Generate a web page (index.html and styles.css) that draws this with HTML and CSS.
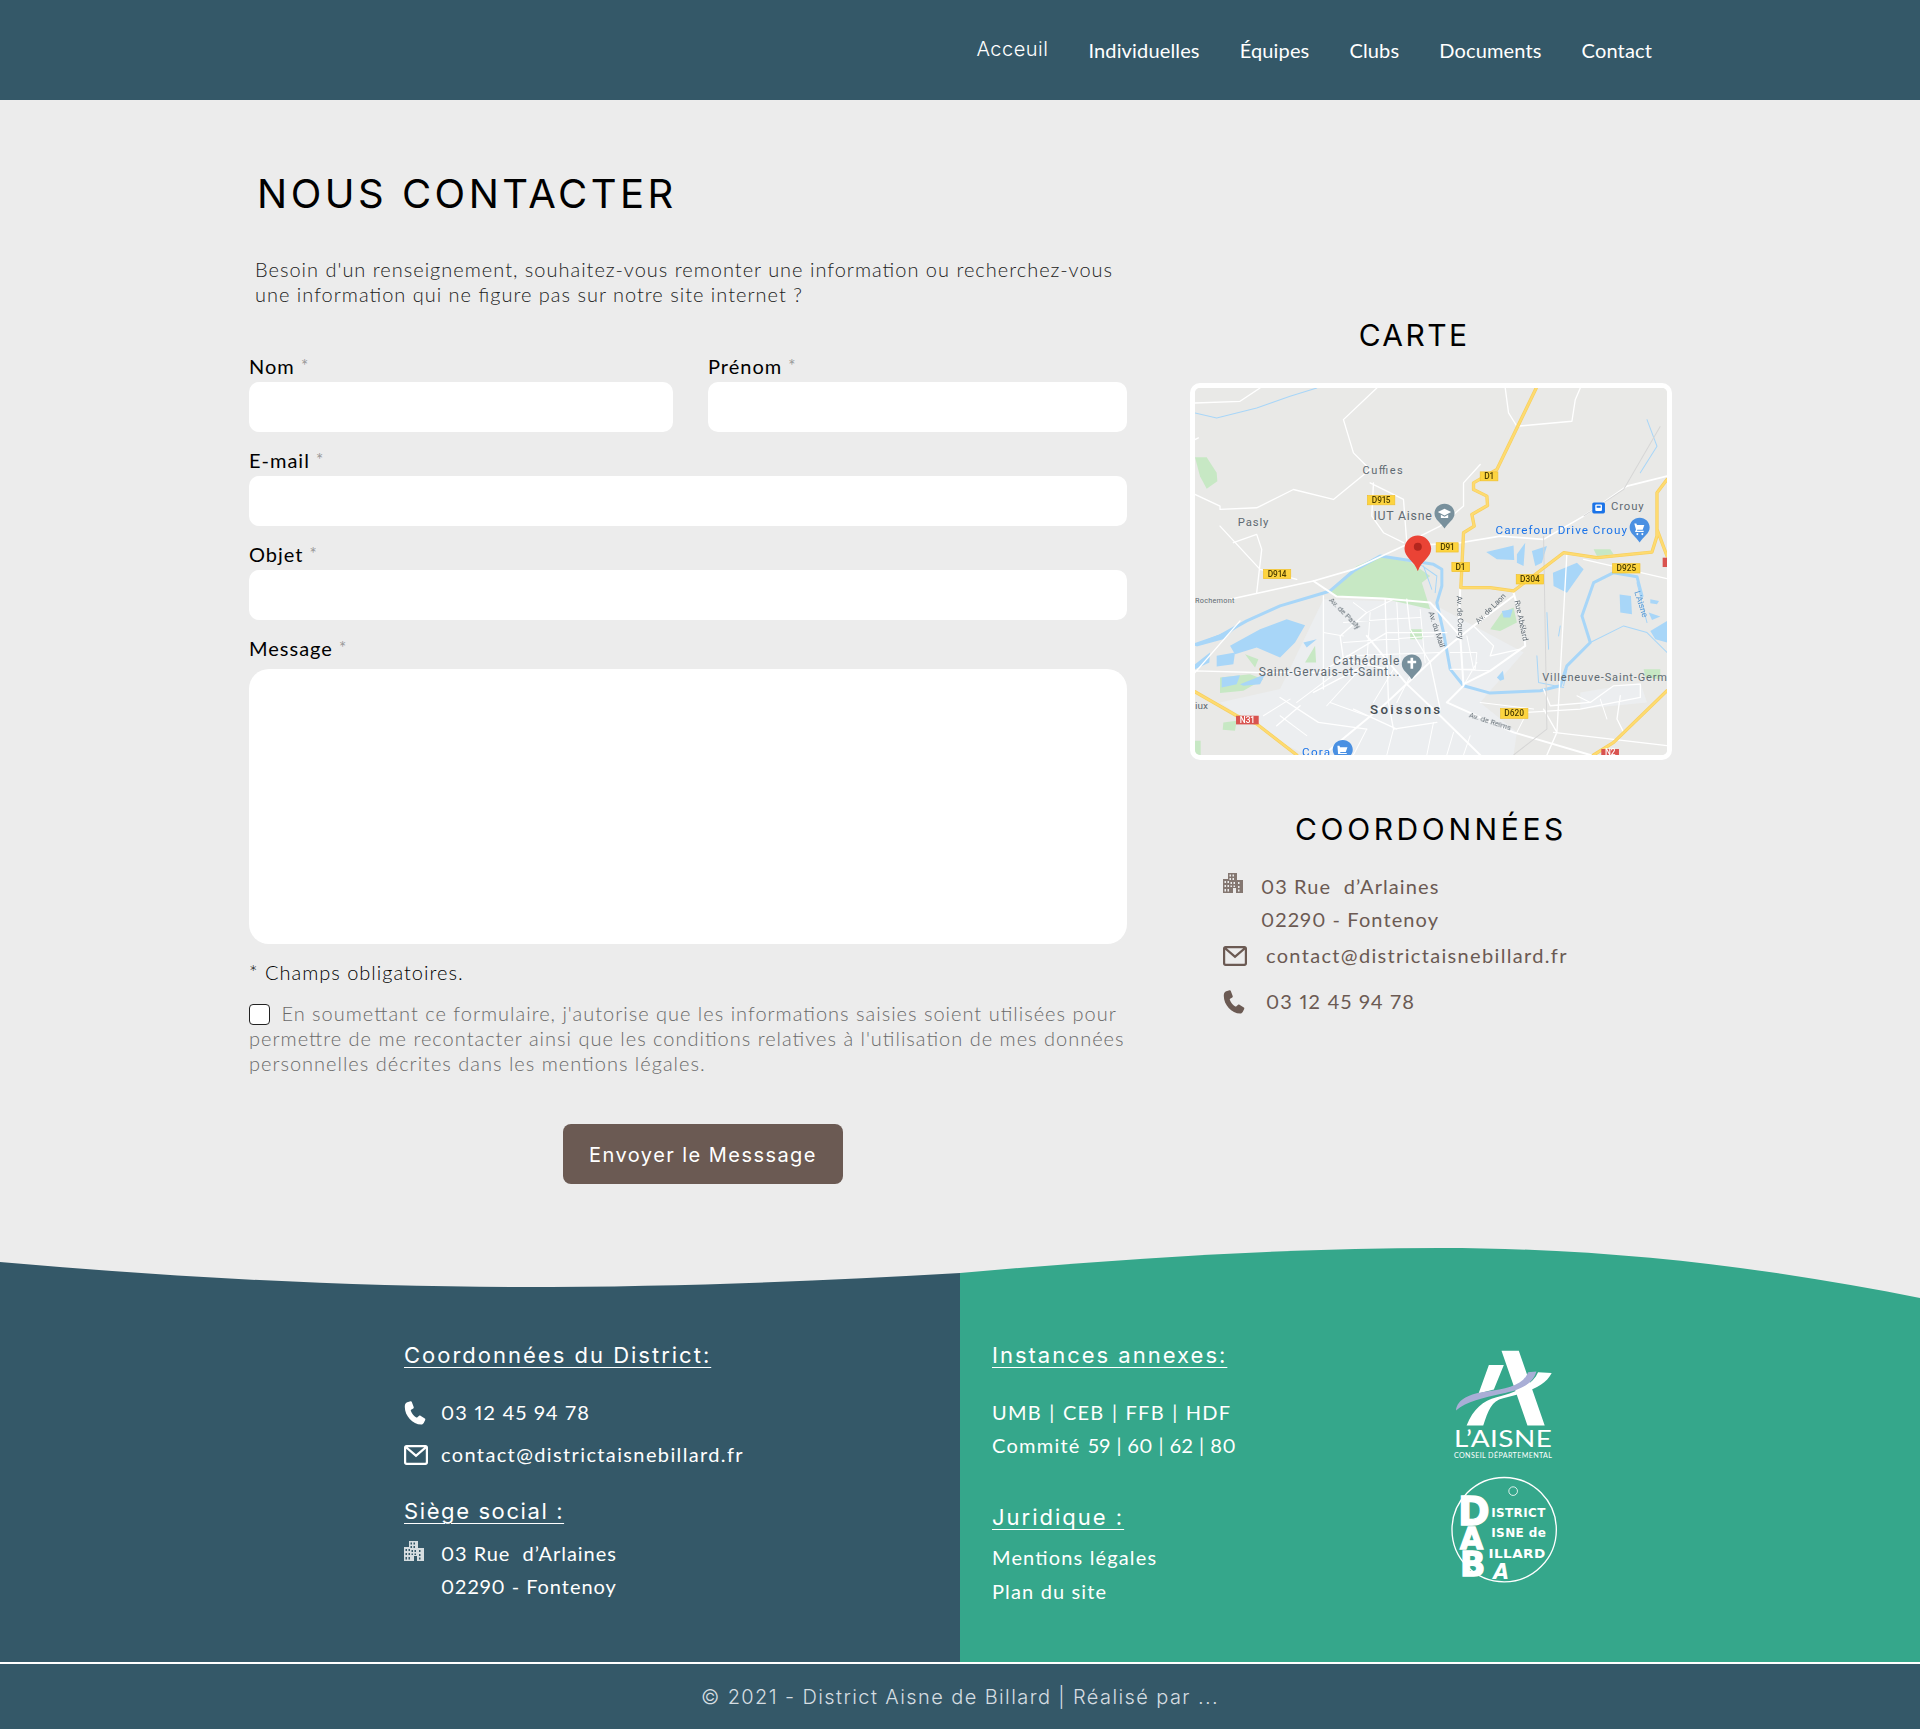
FILE: index.html
```html
<!DOCTYPE html>
<html lang="fr">
<head>
    <meta charset="UTF-8">
    <meta name="viewport" content="width=device-width, initial-scale=1.0">
    <title>Nous contacter</title>
    <link rel="stylesheet" href="styles.css">
</head>
<body>
    <svg class="sprites" width="0" height="0">
        <symbol id="i-phone" viewBox="2 0 22 24">
            <path d="M5.2 1.2 8.6 .3c.6-.1 1 .1 1.2.6l1.900 5.200c.2.500 0 1-.4 1.300L9.100 8.800c-.3.300-.4.700-.2 1.100 1.100 2.800 2.900 5 5.400 6.500.4.200.8.200 1.100-.1l1.700-1.500c.4-.3.900-.4 1.400-.1l4.300 2.900c.5.300.6.800.4 1.300l-1.500 3.200c-.5.900-1.300 1.500-2.400 1.500C10 23.400 1.800 13.500 2.900 4.300c.2-1.500 1-2.700 2.300-3.100z"/>
        </symbol>
        <symbol id="i-mail" viewBox="0 0 24 20">
            <path fill-rule="evenodd" d="M2.500 0h19C22.900 0 24 1.100 24 2.500v15c0 1.400-1.100 2.500-2.500 2.500h-19C1.100 20 0 18.900 0 17.500v-15C0 1.100 1.100 0 2.500 0zM3.800 2.200 12 9.300l8.200-7.100H3.800zM21.800 3.700 12 12.200 2.200 3.700v13.600c0 .3.200.5.500.5h18.600c.3 0 .5-.2.500-.5V3.700z"/>
        </symbol>
        <symbol id="i-building" viewBox="0 0 20 20">
            <path fill-rule="evenodd" d="M5 0h9v7h6v13h-7v-5h-3v5H0V6h5V0zM6.500 1.500v2h1.500v-2H6.500zm3 0v2H11v-2H9.500zM6.500 5v2h1.500V5H6.500zm3 0v2H11V5H9.500zM1.500 8v2H3V8H1.500zm3 0v2H6V8H4.500zm3 1v2H9V9H7.500zm3 0v2H12V9h-1.500zM15 9v2h1.500V9H15zM1.500 12v2H3v-2H1.500zm3 0v2H6v-2H4.500zm3 .5v1.500H9v-1.500H7.500zm3 0v1.500H12v-1.500h-1.500zM15 13v2h1.500v-2H15zM1.500 16v2.500H3V16H1.500zm3 0v2.500H6V16H4.500zM15 16.500v2h1.500v-2H15z"/>
        </symbol>
    </svg>

    <header class="topbar">
        <nav class="topnav">
            <a class="topnav-link current" href="#">Acceuil</a>
            <a class="topnav-link" href="#">Individuelles</a>
            <a class="topnav-link" href="#">Équipes</a>
            <a class="topnav-link" href="#">Clubs</a>
            <a class="topnav-link" href="#">Documents</a>
            <a class="topnav-link" href="#">Contact</a>
        </nav>
    </header>

    <main class="page">
        <section class="contact-form">
            <h1>NOUS CONTACTER</h1>
            <p class="intro">Besoin d'un renseignement, souhaitez-vous remonter une information ou recherchez-vous une information qui ne figure pas sur notre site internet ?</p>

            <form>
                <div class="form-row">
                    <div class="field field-nom">
                        <label>Nom <span class="req">*</span></label>
                        <input type="text">
                    </div>
                    <div class="field field-prenom">
                        <label>Prénom <span class="req">*</span></label>
                        <input type="text">
                    </div>
                </div>
                <div class="field">
                    <label>E-mail <span class="req">*</span></label>
                    <input type="text">
                </div>
                <div class="field">
                    <label>Objet <span class="req">*</span></label>
                    <input type="text">
                </div>
                <div class="field field-message">
                    <label>Message <span class="req">*</span></label>
                    <textarea></textarea>
                </div>
                <p class="mandatory">* Champs obligatoires.</p>
                <p class="consent"><input type="checkbox"> En soumettant ce formulaire, j'autorise que les informations saisies soient utilisées pour permettre de me recontacter ainsi que les conditions relatives à l'utilisation de mes données personnelles décrites dans les mentions légales.</p>
                <div class="submit-row">
                    <button type="button">Envoyer le Messsage</button>
                </div>
            </form>
        </section>

        <aside class="side">
            <h2 class="side-carte">CARTE</h2>
            <div class="map">
                <svg viewBox="45 55 1415 1103" preserveAspectRatio="none">
                    <rect x="45" y="55" width="1415" height="1103" fill="#e9e9e7"/>
                    <!-- city -->
                    <path d="M430 690 750 700 900 780 1030 850 900 1000 1010 1090 1000 1158H380L300 1120 120 1000 300 960z" fill="#eceef0"/>
                    <path d="M1200 970 1380 940 1400 1000 1200 1020z" fill="#eceef0"/>
                    <!-- greens -->
                    <path d="M445 665 530 590 600 560 690 578 750 620 725 640 750 720 610 688 470 682z" fill="#c7e8c4"/>
                    <path d="M45 263H80L110 310 112 335 80 358 60 320z" fill="#c7e8c4"/>
                    <path d="M930 780 965 730 1000 715 1010 760 960 785z" fill="#c7e8c4"/>
                    <path d="M375 880 405 830 408 880z M120 925 210 915 250 930 190 965 120 972z M690 780H728V810H690z M130 1060 170 1055 165 1085 128 1082z M1240 540H1290L1300 555 1250 560z M45 1115H62V1158H45z M195 855 235 870 225 895z M1390 900H1440V930L1395 925z" fill="#c7e8c4"/>
                    <!-- water -->
                    <path d="M150 830 240 780 320 750 375 768 345 820 300 865 230 835 165 855z" fill="#a8d6f8"/>
                    <path d="M45 885 90 850 88 880 45 900z M110 860 165 850 160 885 110 892z M125 925 180 918 170 945 125 955z M180 945 255 915 240 945 190 950z M370 820 410 810 380 835z M45 825 170 775 130 810 50 832z" fill="#a8d6f8"/>
                    <path d="M918 548 1000 528 1002 572 950 570z M1010 555 1035 520 1030 590 1010 580z M1055 545 1100 530 1085 580 1065 590z M1118 610 1190 580 1210 600 1160 670 1120 650z M1318 676 1352 680 1355 735 1320 730z M1410 690 1436 695 1430 705 1410 702z M1405 730 1440 742 1415 752z M1410 785 1460 755V820L1425 810z M950 925 968 905 972 930 960 935z M965 725 998 720 990 745 970 745z" fill="#a8d6f8"/>
                    <g fill="none" stroke="#a8d6f8" stroke-linejoin="round" stroke-linecap="round">
                        <path stroke-width="9" d="M45 826 120 800 200 755 300 710 400 680 450 665 520 605 600 560 680 572 760 585 785 600 785 650 770 700 790 790 810 900 850 950 930 972 1080 965 1140 950 1160 890 1230 820 1205 740 1240 640 1300 610 1370 622 1385 680"/>
                        <path stroke-width="3" d="M45 130 110 145 230 115 330 80 410 55M1230 820 1330 770 1400 790 1460 850M1160 900 1150 950M1370 640 1400 760M1070 860 1075 940 1150 955M1100 730 1105 840M1140 770 1135 800"/>
                        <path stroke-width="3" d="M720 585 770 620 765 670M730 590 755 660M1400 150 1430 230 1380 310"/>
                    </g>
                    <!-- roads -->
                    <g fill="none" stroke="#fff" stroke-width="5" stroke-linejoin="round" stroke-linecap="round">
                        <path d="M150 690 400 635 520 600 670 530 840 520 960 500 1090 510 1210 440 1340 350 1460 320"/>
                        <path stroke-width="6" d="M400 635 470 682 610 688 750 700 840 800 850 950 800 1000 1000 1090 1230 1158M840 660 835 810M1000 670 1030 780 1035 830 930 905 850 945M1000 680 880 770 780 850 620 1000 430 1158M560 800 680 945 780 1040 900 1158"/>
                        <path stroke-width="4" d="M120 470 240 600 350 630M160 520 230 495 245 540 230 670M45 375 120 410 120 420 230 415 340 360 460 390 570 300 520 250 490 150 590 55M570 340 670 390 680 520M580 340 575 440 610 490 670 520M975 55 985 130 1010 170 1175 155 1185 90 1200 55M900 285 850 340 850 410 780 470 720 500M45 100 180 95 240 55M45 210 55 205M180 755 45 910M45 905 230 910 420 910 620 790M430 680 430 960M615 688 625 1000 640 1080 770 1060M680 690 690 780 750 880 780 1020M560 730 480 800 490 870 620 900M400 970 590 870M620 790 800 790M880 770 940 830 930 860 1020 840M300 985 415 1060 560 1080M360 1010 290 1070M520 1020 650 1080M1090 960 1110 1010 1230 1000 1300 950 1380 945 1380 985 1200 1020 1040 1030M1320 980 1310 1050 1330 1090M1120 1090 1460 1130M1090 1020 1130 1090 1100 1158M1210 570 1460 628M1160 550 1130 1090"/>
                        <path stroke-width="3" d="M520 700 560 730 640 690M490 760 620 750 720 745M490 820 760 800M500 860 780 850M570 730 560 880M650 700 660 880M720 720 735 880M430 790 490 800M350 1000 470 910M450 1000 560 1040M540 900 440 1010M640 900 580 1000M700 900 650 1000M810 850 890 850 885 900 820 900M810 900 930 905M860 800 880 900M890 880 850 950M640 1080 620 1158M760 1060 740 1158M820 1090 800 1158M870 1100 850 1158M560 1080 520 1158M300 1040 380 1100M1190 980 1230 1000M1260 990 1280 1050M1040 1030 1010 1090M330 990 250 1040M900 1000 1060 1020"/>
                    </g>
                    <path d="M1090 500 1100 1080 1000 1158" fill="none" stroke="#d6d6d6" stroke-width="3"/>
                    <path d="M1210 440 1330 360 1440 170" fill="none" stroke="#d6d6d6" stroke-width="3"/>
                    <!-- main yellow roads -->
                    <g fill="none" stroke="#f7cf5f" stroke-width="10" stroke-linejoin="round" stroke-linecap="round">
                        <path d="M1068 55 950 300 880 340 880 360 920 380 922 408 875 435 882 470 850 490 842 655 930 655 1000 665 1150 550 1250 565 1415 548 1430 500 1430 370 1460 330M1430 480 1460 560M45 968 170 1040 230 1065 350 1158M1460 965 1300 1120 1240 1158"/>
                    </g>
                    <g fill="none" stroke="#fedb70" stroke-width="6" stroke-linejoin="round" stroke-linecap="round">
                        <path d="M1068 55 950 300 880 340 880 360 920 380 922 408 875 435 882 470 850 490 842 655 930 655 1000 665 1150 550 1250 565 1415 548 1430 500 1430 370 1460 330M1430 480 1460 560M45 968 170 1040 230 1065 350 1158M1460 965 1300 1120 1240 1158"/>
                    </g>
                    <!-- labels -->
                    <g font-family="Roboto, sans-serif" fill="#5f6a72">
                        <text x="547" y="312" font-size="33" textLength="121">Cuffies</text>
                        <text x="173" y="469" font-size="34" textLength="92">Pasly</text>
                        <text x="580" y="452" font-size="37" textLength="175">IUT Aisne</text>
                        <text x="1292" y="422" font-size="34" textLength="98">Crouy</text>
                        <text x="45" y="702" font-size="22" textLength="118">Rochemont</text>
                        <text x="459" y="888" font-size="36" textLength="199">Cathédrale</text>
                        <text x="236" y="922" font-size="36" textLength="422">Saint-Gervais-et-Saint...</text>
                        <text x="1086" y="935" font-size="33" textLength="374">Villeneuve-Saint-Germ</text>
                        <text x="45" y="1020" font-size="30">iux</text>
                        <text x="570" y="1034" font-size="40" font-weight="500" textLength="210" fill="#444c52">Soissons</text>
                        <g font-size="23">
                            <text transform="translate(445 695) rotate(45)">Av. de Pasly</text>
                            <text transform="translate(745 730) rotate(72)">Av. du Mail</text>
                            <text transform="translate(830 680) rotate(88)">Av. de Coucy</text>
                            <text transform="translate(895 765) rotate(-45)">Av. de Laon</text>
                            <text transform="translate(1003 695) rotate(78)">Rue Abélard</text>
                            <text transform="translate(865 1045) rotate(18)">Av. de Reims</text>
                        </g>
                        <text transform="translate(1362 668) rotate(72)" font-size="26" fill="#5b9bd5">L'Aisne</text>
                        <text x="946" y="495" font-size="35" textLength="394" fill="#1a73e8">Carrefour Drive Crouy</text>
                        <text x="366" y="1162" font-size="35" textLength="84" fill="#1a73e8">Cora</text>
                    </g>
                    <!-- road shields -->
                    <g font-family="Roboto, sans-serif" font-size="25" font-weight="500" text-anchor="middle" fill="#4a3c00">
                        <rect class="shield" x="900" y="307" width="53" height="27"/><text x="926" y="329">D1</text>
                        <rect class="shield" x="562" y="378" width="82" height="28"/><text x="603" y="400">D915</text>
                        <rect class="shield" x="768" y="520" width="66" height="28"/><text x="801" y="543">D91</text>
                        <rect class="shield" x="815" y="579" width="53" height="28"/><text x="840" y="602">D1</text>
                        <rect class="shield" x="250" y="600" width="82" height="28"/><text x="291" y="623">D914</text>
                        <rect class="shield" x="1008" y="616" width="82" height="28"/><text x="1049" y="639">D304</text>
                        <rect class="shield" x="1297" y="583" width="82" height="28"/><text x="1338" y="606">D925</text>
                        <rect class="shield" x="961" y="1018" width="82" height="30"/><text x="1002" y="1042">D620</text>
                        <rect x="1447" y="565" width="13" height="28" fill="#d9534f"/>
                        <rect x="168" y="1040" width="68" height="26" fill="#d9534f"/><text x="201" y="1062" fill="#fff">N31</text>
                        <rect x="1263" y="1140" width="53" height="18" fill="#d9534f"/><text x="1290" y="1158" fill="#fff">N2</text>
                    </g>
                    <!-- poi pins -->
                    <path d="M793 403c17 0 30 13 30 29 0 18-19 28-30 45-11-17-30-27-30-45 0-16 13-29 30-29z" fill="#78909c"/>
                    <path d="M793 418 813 428 793 438 773 428z M782 436 793 442 804 436V446H782z" fill="#fff"/>
                    <path d="M695 856c17 0 30 13 30 29 0 18-19 28-30 45-11-17-30-27-30-45 0-16 13-29 30-29z" fill="#78909c"/>
                    <path d="M691 866h8v9h9v7h-9v17h-8v-17h-9v-7h9z" fill="#fff"/>
                    <path d="M1378 445c17 0 30 13 30 29 0 18-19 28-30 45-11-17-30-27-30-45 0-16 13-29 30-29z" fill="#4a90e2"/>
                    <path d="M1362 462h6l2 5h22l-5 14h-16l-1 3h20v4h-26l3-8-5-18zM1371 491a3 3 0 1 0 .1 0zM1386 491a3 3 0 1 0 .1 0z" fill="#fff"/>
                    <path d="M488 1113c17 0 30 13 30 29 0 18-19 28-30 45-11-17-30-27-30-45 0-16 13-29 30-29z" fill="#4a90e2"/>
                    <path d="M472 1130h6l2 5h22l-5 14h-16l-1 3h20v3h-26z" fill="#fff"/>
                    <rect x="1236" y="399" width="38" height="33" rx="5" fill="#1a73e8"/>
                    <rect x="1245" y="405" width="20" height="20" rx="3" fill="#fff"/>
                    <rect x="1249" y="409" width="12" height="6" fill="#1a73e8"/>
                    <!-- main pin -->
                    <path d="M713 498c22 0 40 18 40 40 0 27-30 36-40 68-10-32-40-41-40-68 0-22 18-40 40-40z" fill="#ea4335"/>
                    <circle cx="713" cy="532" r="12" fill="#b3261e"/>
                </svg>
            </div>
            <h2 class="side-coord">COORDONNÉES</h2>
            <div class="coord-block">
                <svg class="icon icon-building"><use href="#i-building"/></svg>
                <p>03 Rue &nbsp;d’Arlaines<br>02290 - Fontenoy</p>
            </div>
            <div class="coord-line coord-mail">
                <svg class="icon icon-mail"><use href="#i-mail"/></svg>
                <span>contact@districtaisnebillard.fr</span>
            </div>
            <div class="coord-line coord-phone">
                <svg class="icon icon-phone"><use href="#i-phone"/></svg>
                <span>03 12 45 94 78</span>
            </div>
        </aside>
    </main>

    <footer>
        <svg class="wave" viewBox="0 0 1920 50" preserveAspectRatio="none">
            <path d="M0 14C180 30 360 39 520 39 680 39 820 33 960 25V50H0z" fill="#345868"/>
            <path d="M960 25C1120 11 1280 0 1440 0 1620 0 1780 22 1920 50H960z" fill="#35a78b"/>
        </svg>
        <div class="footer-cols">
            <div class="footer-left">
                <h3>Coordonnées du District:</h3>
                <div class="foot-line foot-phone">
                    <svg class="icon icon-phone"><use href="#i-phone"/></svg>
                    <span>03 12 45 94 78</span>
                </div>
                <div class="foot-line foot-mail">
                    <svg class="icon icon-mail"><use href="#i-mail"/></svg>
                    <span>contact@districtaisnebillard.fr</span>
                </div>
                <h3 class="foot-siege">Siège social :</h3>
                <div class="foot-addr">
                    <svg class="icon icon-building"><use href="#i-building"/></svg>
                    <p>03 Rue &nbsp;d’Arlaines<br>02290 - Fontenoy</p>
                </div>
            </div>
            <div class="footer-right">
                <div class="footer-links">
                    <h3>Instances annexes:</h3>
                    <p class="foot-instances">UMB | CEB | FFB | HDF<br>Commité <span class="foot-nums">59 | 60 | 62 | 80</span></p>
                    <h3 class="foot-juridique">Juridique :</h3>
                    <p class="foot-legal">Mentions légales<br>Plan du site</p>
                </div>
                <div class="footer-logos">
                    <svg class="logo-aisne" viewBox="100 60 305 340">
                        <path fill="#fff" d="M245 65h52l78 225h-52L245 65zM207 108h45l-30 74-46 12z"/>
                        <path fill="#a9aed6" d="M108 245C112 210 150 195 200 188 260 180 310 170 325 130L350 128C340 165 305 182 245 195 190 207 140 218 108 245z"/>
                        <path fill="#fff" d="M396 132C375 175 310 195 250 208 215 216 205 245 190 290H140C160 240 190 215 230 205 300 188 340 165 355 130z"/>
                        <text x="102" y="355" font-family="Lato, sans-serif" font-size="68" fill="#fff" textLength="296" lengthAdjust="spacingAndGlyphs">L’AISNE</text>
                        <text x="102" y="388" font-family="Lato, sans-serif" font-size="24" fill="#fff" textLength="296" lengthAdjust="spacingAndGlyphs">CONSEIL DÉPARTEMENTAL</text>
                    </svg>
                    <svg class="logo-dab" viewBox="92 445 325 320">
                        <circle cx="255" cy="604" r="157" fill="none" stroke="#fff" stroke-width="4"/>
                        <circle cx="282" cy="488" r="13" fill="none" stroke="#fff" stroke-width="2.500"/>
                        <g font-family="'DejaVu Sans', sans-serif" font-weight="700" fill="#fff">
                            <text x="116" y="590" font-size="115" stroke="#fff" stroke-width="4">D</text>
                            <text x="122" y="662" font-size="90" stroke="#fff" stroke-width="4">A</text>
                            <text x="122" y="742" font-size="100" stroke="#fff" stroke-width="4">B</text>
                            <text x="216" y="566" font-size="38" textLength="164" lengthAdjust="spacingAndGlyphs">ISTRICT</text>
                            <text x="216" y="626" font-size="36" textLength="166" lengthAdjust="spacingAndGlyphs">ISNE de</text>
                            <text x="208" y="689" font-size="38" textLength="172" lengthAdjust="spacingAndGlyphs">ILLARD</text>
                            <text x="222" y="752" font-size="62" font-style="italic">A</text>
                        </g>
                    </svg>
                </div>
            </div>
        </div>
        <div class="footer-bottom">© 2021 - District Aisne de Billard | Réalisé par ...</div>
    </footer>
</body>
</html>
```

FILE: styles.css
```css
/* Base */
body {
    margin: 0;
    background-color: #ececec;
    font-family: "Lato", sans-serif;
    font-feature-settings: "liga" 1, "pnum" 1;
    color: #000;
}

.sprites {
    display: block;
    height: 0;
}

.icon {
    fill: currentColor;
    display: block;
    flex: none;
}

.icon-building {
    width: 20px;
    height: 20px;
    opacity: .8;
}

.icon-mail {
    width: 24px;
    height: 20px;
}

.icon-phone {
    width: 22px;
    height: 24px;
}

/* Top bar */
.topbar {
    background-color: #345868;
    height: 100px;
}

.topnav {
    display: flex;
    justify-content: flex-end;
    align-items: center;
    gap: 40px;
    height: 100px;
    padding-right: 268px;
}

.topnav-link {
    color: #fff;
    text-decoration: none;
    font-size: 20px;
    letter-spacing: .15px;
}

.topnav-link.current {
    font-family: "Inter", sans-serif;
    font-weight: 300;
    font-size: 20px;
    letter-spacing: .5px;
    position: relative;
    top: -1px;
}

/* Page layout */
.page {
    display: grid;
    grid-template-columns: 878px 482px;
    column-gap: 63px;
    padding: 70px 0 64px 249px;
}

/* Contact form */
h1 {
    margin: 0 0 0 8px;
    font-family: "Inter", sans-serif;
    font-weight: 400;
    font-size: 40px;
    line-height: 48px;
    letter-spacing: 3.500px;
}

.intro {
    margin: 39px 0 0 6px;
    font-size: 20px;
    font-weight: 300;
    line-height: 25px;
    letter-spacing: 1px;
    color: #222;
}

form {
    margin-top: 48px;
}

.form-row {
    display: grid;
    grid-template-columns: 424px 419px;
    column-gap: 35px;
}

.field {
    margin-bottom: 17px;
}

.field label {
    display: block;
    height: 27px;
    font-size: 20px;
    line-height: 22px;
    letter-spacing: 1px;
}

.req {
    color: #999;
    font-size: 17px;
    vertical-align: 2px;
}

.field input,
.field textarea {
    display: block;
    box-sizing: border-box;
    width: 100%;
    height: 50px;
    border: 0;
    border-radius: 10px;
    background-color: #fff;
    padding: 0 12px;
}

.field-message label {
    height: 32px;
}

.field-message textarea {
    height: 275px;
    border-radius: 20px;
    resize: none;
}

.mandatory {
    margin: -1px 0 0;
    font-size: 20px;
    font-weight: 300;
    line-height: 25px;
    letter-spacing: 1px;
}

.consent {
    margin: 16px 0 0;
    font-size: 20px;
    font-weight: 300;
    line-height: 25px;
    letter-spacing: 1px;
    color: #6a6a6a;
}

.consent input {
    appearance: none;
    box-sizing: border-box;
    width: 21px;
    height: 21px;
    margin: 0 5px 0 0;
    border: 1.500px solid #222;
    border-radius: 4px;
    background: #fff;
    vertical-align: -4px;
}

.submit-row {
    margin-top: 48px;
    padding-left: 314px;
}

.submit-row button {
    width: 280px;
    height: 60px;
    padding-top: 2px;
    border: 0;
    border-radius: 8px;
    background-color: #6b5a53;
    color: #fff;
    font-family: "Inter", sans-serif;
    font-size: 20px;
    letter-spacing: 1.450px;
}

/* Right column */
.side h2 {
    margin: 0;
    font-family: "Inter", sans-serif;
    font-weight: 400;
    font-size: 30px;
    line-height: 36px;
    letter-spacing: 2.400px;
    text-align: center;
}

.side-carte {
    padding-top: 147px;
    padding-right: 34px;
}

.map {
    box-sizing: border-box;
    height: 377px;
    margin-top: 30px;
    border: 5px solid #fff;
    border-radius: 10px;
    overflow: hidden;
}

.map svg {
    display: block;
    width: 100%;
    height: 100%;
    filter: blur(.4px);
}

.shield {
    fill: #fdd43f;
    stroke: #f0c02e;
    stroke-width: 2;
}

.side .side-coord {
    margin-top: 51px;
    letter-spacing: 3.600px;
}

.coord-block,
.coord-line {
    display: flex;
    margin-left: 33px;
    color: #6b5a53;
    font-size: 20px;
    letter-spacing: 1.100px;
}

.coord-block {
    margin-top: 23px;
    gap: 18px;
}

.coord-block p {
    margin: 0;
    line-height: 33px;
}

.coord-block .icon {
    margin-top: 3px;
}

.coord-line {
    align-items: center;
    line-height: 33px;
}

.coord-mail {
    gap: 19px;
    margin-top: 3px;
    letter-spacing: 1.330px;
}

.coord-phone {
    gap: 21px;
    margin-top: 13px;
}

.coord-phone span,
.foot-phone span {
    letter-spacing: 1.200px;
}

/* Footer */
.wave {
    display: block;
    width: 100%;
    height: 50px;
}

.footer-cols {
    display: grid;
    grid-template-columns: 960px 960px;
    height: 364px;
    color: #fff;
    font-size: 20px;
    letter-spacing: 1.250px;
}

.footer-cols h3 {
    margin: 0;
    font-family: "Inter", sans-serif;
    font-weight: 400;
    font-size: 22px;
    line-height: 28px;
    letter-spacing: 2px;
    text-decoration: underline;
    text-underline-offset: 4px;
    text-decoration-thickness: 1px;
}

.footer-cols p {
    margin: 0;
}

.footer-left {
    background-color: #345868;
    padding: 43px 0 0 404px;
}

.foot-line {
    display: flex;
    align-items: center;
    line-height: 33px;
}

.foot-phone {
    gap: 15px;
    margin-top: 27px;
}

.foot-mail {
    gap: 13px;
    margin-top: 9px;
    letter-spacing: 1.370px;
}

.footer-cols .foot-siege {
    margin-top: 26px;
    letter-spacing: 1.600px;
}

.foot-addr {
    display: flex;
    gap: 17px;
    margin-top: 12px;
    letter-spacing: .95px;
}

.foot-addr p {
    line-height: 33px;
}

.foot-addr .icon {
    margin-top: 4px;
}

.footer-right {
    display: flex;
    background-color: #35a78b;
    padding: 43px 0 0 32px;
}

.footer-links {
    width: 457px;
}

.footer-cols .foot-instances {
    margin-top: 27px;
    line-height: 33px;
    word-spacing: 1px;
}

.foot-nums {
    letter-spacing: .5px;
    word-spacing: 0;
}

.footer-cols .foot-juridique {
    margin-top: 41px;
}

.footer-cols .foot-legal {
    margin-top: 9px;
    line-height: 34px;
    letter-spacing: 1.150px;
}

.footer-logos {
    display: flex;
    flex-direction: column;
    align-items: center;
    gap: 14px;
    width: 110px;
    margin-top: 8px;
}

.logo-aisne {
    width: 102px;
    height: 113px;
}

.logo-dab {
    width: 108px;
    height: 108px;
}

.footer-bottom {
    box-sizing: border-box;
    border-top: 2px solid #fff;
    height: 67px;
    padding-top: 2px;
    background-color: #345868;
    color: #d5dde1;
    font-family: "Inter", sans-serif;
    font-weight: 300;
    font-size: 20px;
    line-height: 63px;
    letter-spacing: 1.400px;
    text-align: center;
}
```
